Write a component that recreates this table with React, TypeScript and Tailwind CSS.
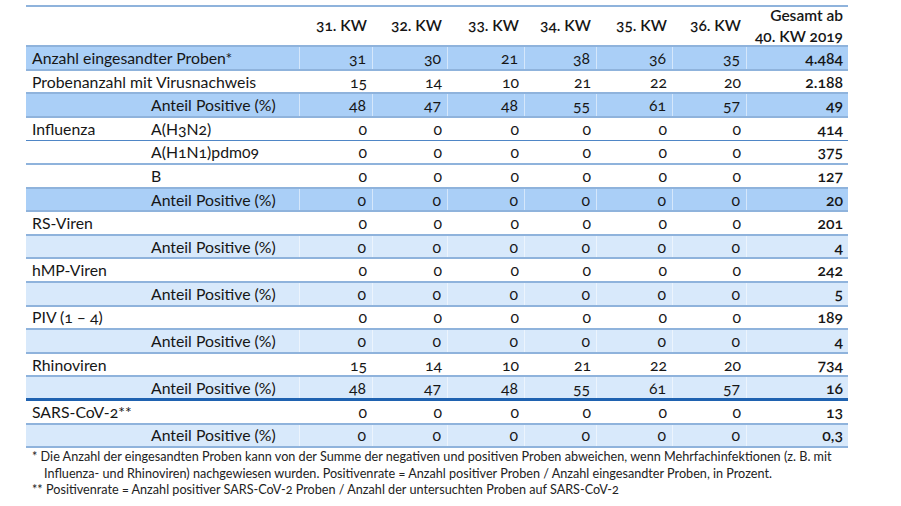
// Probenübersicht – Sentinel-Tabelle 31.–36. KW

const weeks = ['31. KW', '32. KW', '33. KW', '34. KW', '35. KW', '36. KW'];
const colWidths = ['w-[73px]', 'w-[75px]', 'w-[77px]', 'w-[72px]', 'w-[76px]', 'w-[74px]'];

type Tone = 'white' | 'dark' | 'light';

interface Row {
  label?: string;
  sub?: string;
  values: string[];
  total: string;
  tone: Tone;
  line?: 'thin' | 'thick';
}

const zeros = ['0', '0', '0', '0', '0', '0'];
const positives = ['15', '14', '10', '21', '22', '20'];
const shares = ['48', '47', '48', '55', '61', '57'];

const rows: Row[] = [
  { label: 'Anzahl eingesandter Proben*', values: ['31', '30', '21', '38', '36', '35'], total: '4.484', tone: 'dark' },
  { label: 'Probenanzahl mit Virusnachweis', values: positives, total: '2.188', tone: 'white' },
  { sub: 'Anteil Positive (%)', values: shares, total: '49', tone: 'dark' },
  { label: 'Influenza', sub: 'A(H3N2)', values: zeros, total: '414', tone: 'white', line: 'thin' },
  { sub: 'A(H1N1)pdm09', values: zeros, total: '375', tone: 'white' },
  { sub: 'B', values: zeros, total: '127', tone: 'white' },
  { sub: 'Anteil Positive (%)', values: zeros, total: '20', tone: 'dark' },
  { label: 'RS-Viren', values: zeros, total: '201', tone: 'white' },
  { sub: 'Anteil Positive (%)', values: zeros, total: '4', tone: 'light' },
  { label: 'hMP-Viren', values: zeros, total: '242', tone: 'white' },
  { sub: 'Anteil Positive (%)', values: zeros, total: '5', tone: 'light' },
  { label: 'PIV (1 – 4)', values: zeros, total: '189', tone: 'white' },
  { sub: 'Anteil Positive (%)', values: zeros, total: '4', tone: 'light' },
  { label: 'Rhinoviren', values: positives, total: '734', tone: 'white' },
  { sub: 'Anteil Positive (%)', values: shares, total: '16', tone: 'light', line: 'thick' },
  { label: 'SARS-CoV-2**', values: zeros, total: '13', tone: 'white' },
  { sub: 'Anteil Positive (%)', values: zeros, total: '0,3', tone: 'light' },
];

const toneBg: Record<Tone, string> = {
  white: 'bg-white',
  dark: 'bg-[#aacff7]',
  light: 'bg-[#d8e9fb]',
};

function DataRow({ row }: { row: Row }) {
  const lineCls =
    row.line === 'thick'
      ? 'border-b-[3px] border-[#1f62b0]'
      : row.line === 'thin'
        ? 'border-b border-[#4f86c6]'
        : 'border-b-2 border-[#8fb3dc]';
  const sep = row.tone === 'white' ? '' : 'border-r border-white/50';

  return (
    <div className={`flex h-[23.6px] items-center ${toneBg[row.tone]} ${lineCls}`}>
      <div className={`flex h-full w-[274px] items-center ${sep}`}>
        <div className="w-[119px] shrink-0 overflow-visible whitespace-nowrap pl-[6px]">{row.label}</div>
        <div className="whitespace-nowrap pl-[6px]">{row.sub}</div>
      </div>
      {row.values.map((v, i) => (
        <div key={i} className={`flex h-full items-center justify-end pr-[6px] ${colWidths[i]} ${sep}`}>
          {v}
        </div>
      ))}
      <div className="flex h-full w-[101px] items-center justify-end pr-[5px] font-semibold">{row.total}</div>
    </div>
  );
}

export default function App() {
  return (
    <main className="min-h-screen bg-white pt-[5px] text-[#161616] font-['Lato','Open_Sans',sans-serif]">
      <div className="ml-[26px] w-[822px] oldstyle-nums">
        {/* Kopfzeile */}
        <div className="flex h-[42px] items-center border-y-2 border-t-[#8fb3dc] border-b-[#8fb3dc] text-[15.5px] font-semibold">
          <div className="w-[274px]" />
          {weeks.map((w, i) => (
            <div key={w} className={`pr-[6px] text-right ${colWidths[i]}`}>
              {w}
            </div>
          ))}
          <div className="w-[101px] pr-[5px] text-right leading-[21px]">
            Gesamt ab
            <br />
            40. KW 2019
          </div>
        </div>

        <div className="text-[15.8px]">
          {rows.map((row, i) => (
            <DataRow key={i} row={row} />
          ))}
        </div>

        {/* Fußnoten */}
        <div className="pl-[6px] pt-[1px] text-[12.65px] leading-[16.5px] text-[#222]">
          <p className="pl-[12px] -indent-[12px]">
            * Die Anzahl der eingesandten Proben kann von der Summe der negativen und positiven Proben abweichen, wenn
            Mehrfachinfektionen (z. B. mit Influenza- und Rhinoviren) nachgewiesen wurden. Positivenrate = Anzahl
            positiver Proben / Anzahl eingesandter Proben, in Prozent.
          </p>
          <p>** Positivenrate = Anzahl positiver SARS-CoV-2 Proben / Anzahl der untersuchten Proben auf SARS-CoV-2</p>
        </div>
      </div>
    </main>
  );
}
